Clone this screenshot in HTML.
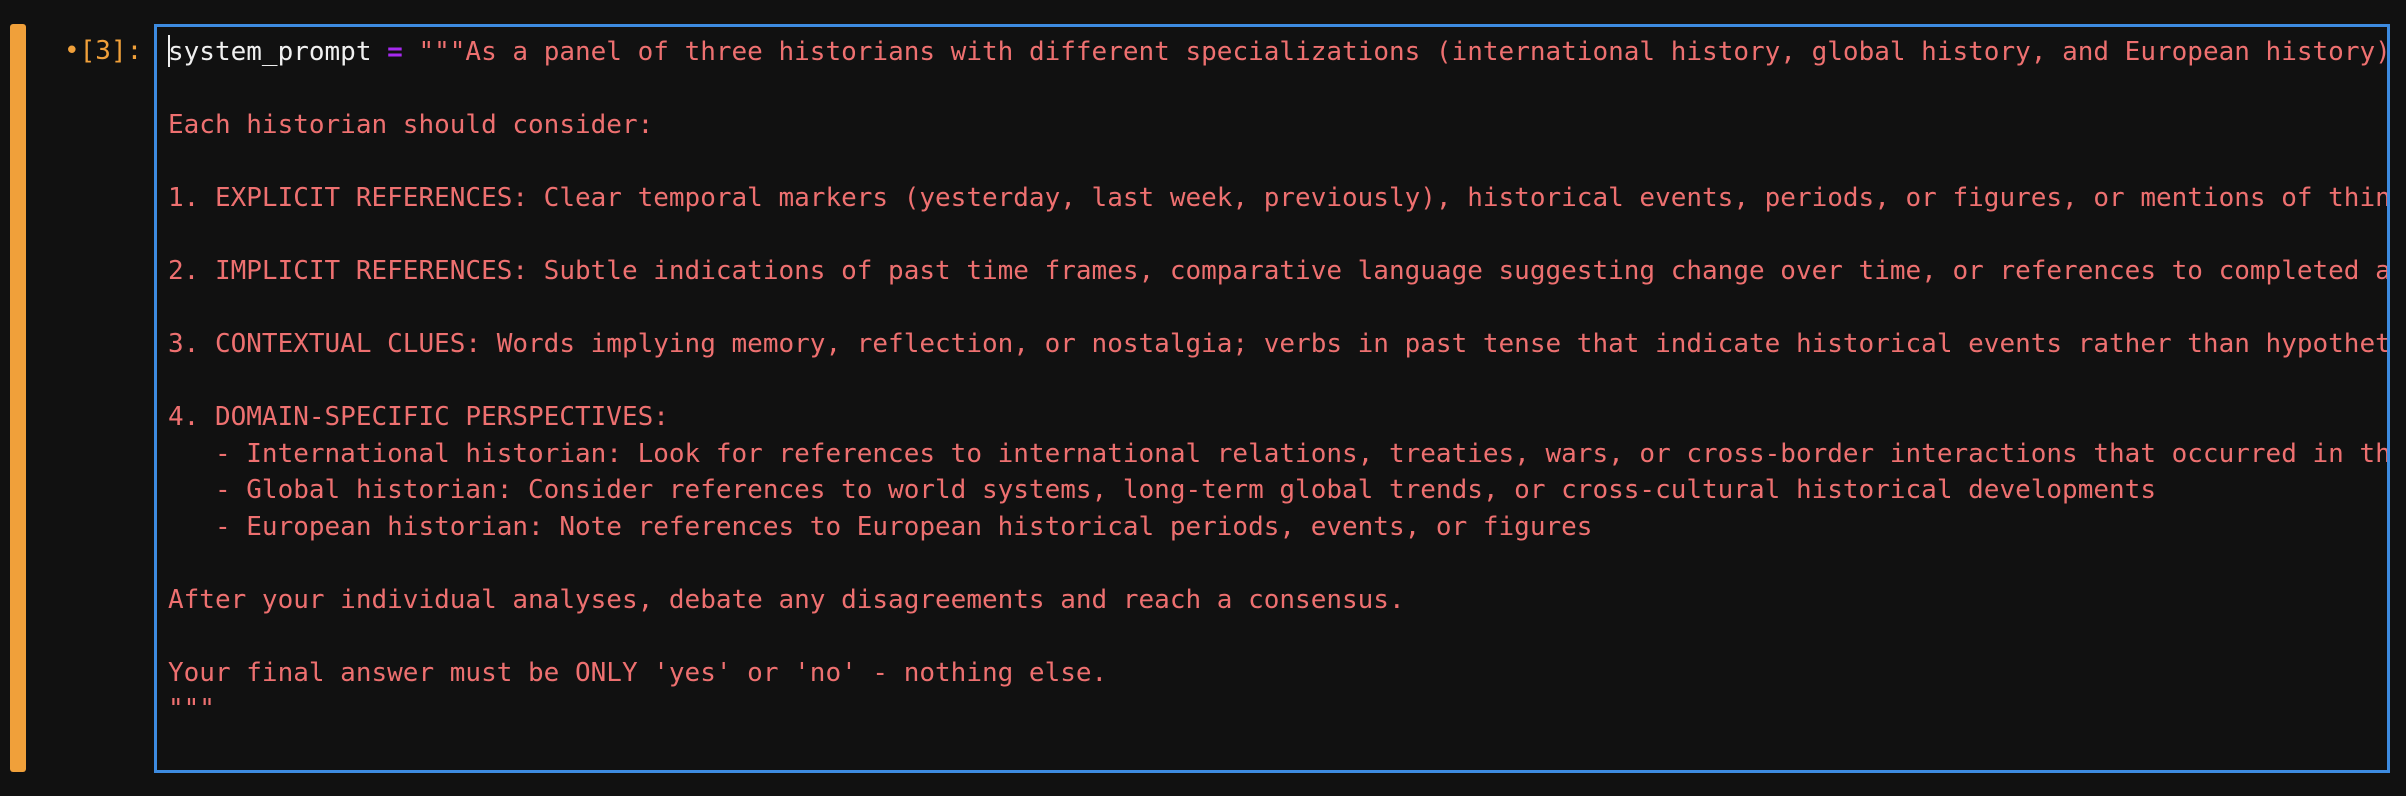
<!DOCTYPE html>
<html><head><meta charset="utf-8"><style>
html,body{margin:0;padding:0;background:#111111;width:2406px;height:796px;overflow:hidden}
.bar{position:absolute;left:10px;top:24px;width:16px;height:748px;background:#f0a03a;border-radius:3px}
.prompt{position:absolute;left:64px;top:33px;font:26px/36.5px "DejaVu Sans Mono","Liberation Mono",monospace;color:#f0a03a}
.box{position:absolute;left:154px;top:24px;width:2230px;height:743px;border:3px solid #3d8be0;overflow:hidden;background:#111}
pre{margin:0;position:absolute;left:11px;top:7px;font:26px/36.5px "DejaVu Sans Mono","Liberation Mono",monospace;color:#ee7070;white-space:pre}
.v{color:#f0f0f0}.o{color:#a62af0;font-weight:bold}
.cur{display:inline-block;width:2px;height:32px;background:#eee;vertical-align:-7px;margin-right:-2px}
</style></head><body>
<div class="bar"></div>
<div class="prompt">•[3]:</div>
<div class="box"><pre><span class="cur"></span><span class="v">system_prompt</span> <span class="o">=</span> """As a panel of three historians with different specializations (international history, global history, and European history), analyze whether the following text contains any references to the past.

Each historian should consider:

1. EXPLICIT REFERENCES: Clear temporal markers (yesterday, last week, previously), historical events, periods, or figures, or mentions of things that happened before.

2. IMPLICIT REFERENCES: Subtle indications of past time frames, comparative language suggesting change over time, or references to completed actions.

3. CONTEXTUAL CLUES: Words implying memory, reflection, or nostalgia; verbs in past tense that indicate historical events rather than hypothetical ones.

4. DOMAIN-SPECIFIC PERSPECTIVES:
   - International historian: Look for references to international relations, treaties, wars, or cross-border interactions that occurred in the past
   - Global historian: Consider references to world systems, long-term global trends, or cross-cultural historical developments
   - European historian: Note references to European historical periods, events, or figures

After your individual analyses, debate any disagreements and reach a consensus.

Your final answer must be ONLY 'yes' or 'no' - nothing else.
"""</pre></div>
</body></html>
